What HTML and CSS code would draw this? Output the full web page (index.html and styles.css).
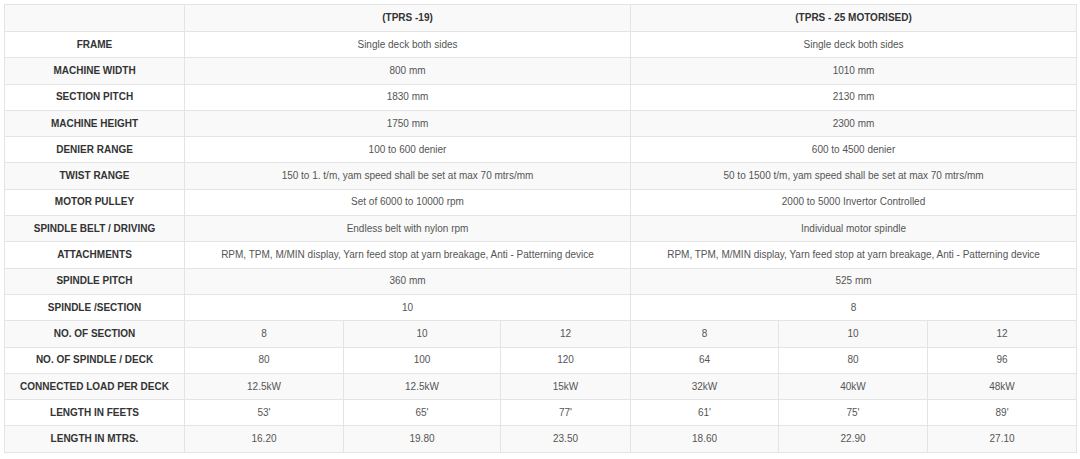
FILE: index.html
```html
<!DOCTYPE html>
<html>
<head>
<meta charset="utf-8">
<link rel="stylesheet" href="styles.css">
</head>
<body>
<table class="spec">
<colgroup>
<col class="c-label"><col class="c1"><col class="c2"><col class="c3"><col class="c4"><col class="c5"><col class="c6">
</colgroup>
<tbody>
<tr class="head"><td class="label"></td><td colspan="3">(TPRS -19)</td><td colspan="3">(TPRS - 25 MOTORISED)</td></tr>
<tr><td class="label">FRAME</td><td colspan="3">Single deck both sides</td><td colspan="3">Single deck both sides</td></tr>
<tr><td class="label">MACHINE WIDTH</td><td colspan="3">800 mm</td><td colspan="3">1010 mm</td></tr>
<tr><td class="label">SECTION PITCH</td><td colspan="3">1830 mm</td><td colspan="3">2130 mm</td></tr>
<tr><td class="label">MACHINE HEIGHT</td><td colspan="3">1750 mm</td><td colspan="3">2300 mm</td></tr>
<tr><td class="label">DENIER RANGE</td><td colspan="3">100 to 600 denier</td><td colspan="3">600 to 4500 denier</td></tr>
<tr><td class="label">TWIST RANGE</td><td colspan="3">150 to 1. t/m, yam speed shall be set at max 70 mtrs/mm</td><td colspan="3">50 to 1500 t/m, yam speed shall be set at max 70 mtrs/mm</td></tr>
<tr><td class="label">MOTOR PULLEY</td><td colspan="3">Set of 6000 to 10000 rpm</td><td colspan="3">2000 to 5000 Invertor Controlled</td></tr>
<tr><td class="label">SPINDLE BELT / DRIVING</td><td colspan="3">Endless belt with nylon rpm</td><td colspan="3">Individual motor spindle</td></tr>
<tr><td class="label">ATTACHMENTS</td><td colspan="3">RPM, TPM, M/MIN display, Yarn feed stop at yarn breakage, Anti - Patterning device</td><td colspan="3">RPM, TPM, M/MIN display, Yarn feed stop at yarn breakage, Anti - Patterning device</td></tr>
<tr><td class="label">SPINDLE PITCH</td><td colspan="3">360 mm</td><td colspan="3">525 mm</td></tr>
<tr><td class="label">SPINDLE /SECTION</td><td colspan="3">10</td><td colspan="3">8</td></tr>
<tr><td class="label">NO. OF SECTION</td><td>8</td><td>10</td><td>12</td><td>8</td><td>10</td><td>12</td></tr>
<tr><td class="label">NO. OF SPINDLE / DECK</td><td>80</td><td>100</td><td>120</td><td>64</td><td>80</td><td>96</td></tr>
<tr><td class="label">CONNECTED LOAD PER DECK</td><td>12.5kW</td><td>12.5kW</td><td>15kW</td><td>32kW</td><td>40kW</td><td>48kW</td></tr>
<tr><td class="label">LENGTH IN FEETS</td><td>53'</td><td>65'</td><td>77'</td><td>61'</td><td>75'</td><td>89'</td></tr>
<tr><td class="label">LENGTH IN MTRS.</td><td>16.20</td><td>19.80</td><td>23.50</td><td>18.60</td><td>22.90</td><td>27.10</td></tr>
</tbody>
</table>
</body>
</html>
```
FILE: styles.css
```css
html, body {
  margin: 0;
  background: #fff;
}
body {
  padding: 4px;
  font-family: "Liberation Sans", Arial, sans-serif;
  font-size: 10px;
  color: #555;
}
.spec {
  border-collapse: collapse;
  table-layout: fixed;
  width: 1072px;
}
.c-label { width: 180px; }
.c1 { width: 159px; }
.c2 { width: 157px; }
.c3 { width: 130px; }
.c4 { width: 148px; }
.c5 { width: 149px; }
.c6 { width: 149px; }
.spec td {
  border: 1px solid #e4e4e4;
  text-align: center;
  vertical-align: middle;
  padding: 0 4px;
  height: 25.3px;
  line-height: 14px;
  white-space: nowrap;
}
.spec tr:nth-child(odd) td {
  background: #f9f9f9;
}
.spec tr.head td {
  height: 26px;
  font-weight: bold;
  color: #333;
}
.spec td.label {
  font-weight: bold;
  color: #333;
}
```
